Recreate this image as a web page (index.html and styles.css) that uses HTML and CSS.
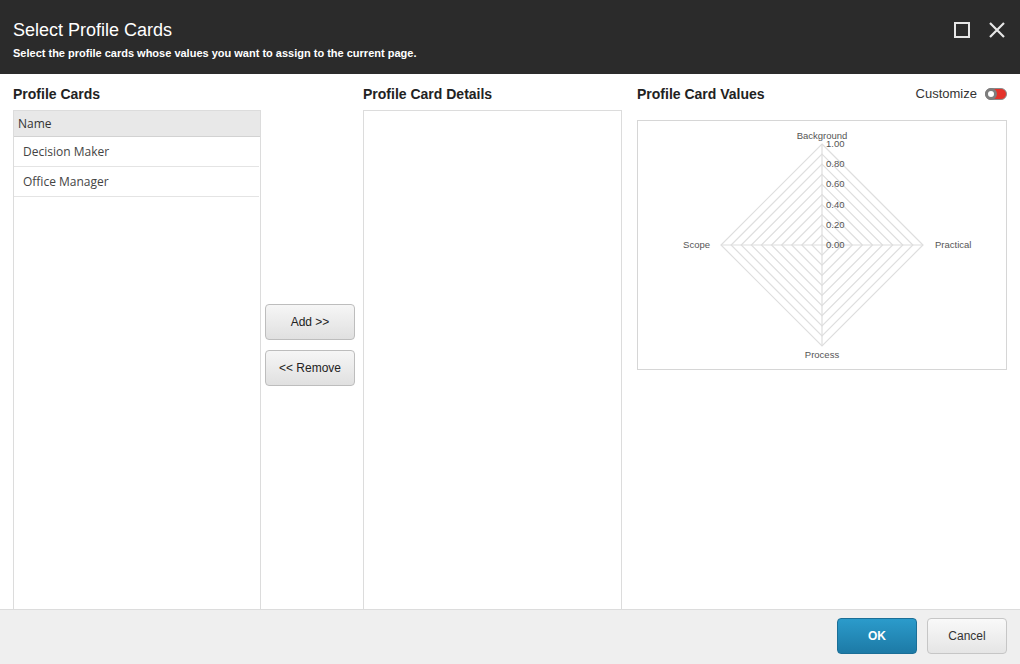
FILE: index.html
```html
<!DOCTYPE html>
<html>
<head>
	<title>Select Profile Cards</title>
	<link rel="stylesheet" href="styles.css">
</head>
<body>
	<div class="dialog">
		<div class="header">
			<div class="header-text">
				<div class="title">Select Profile Cards</div>
				<div class="subtitle">Select the profile cards whose values you want to assign to the current page.</div>
			</div>
			<div class="header-icons">
				<svg width="18" height="18" viewBox="0 0 18 18"><rect x="2" y="2" width="14" height="14" fill="none" stroke="#e6e6e6" stroke-width="2"/></svg>
				<svg width="18" height="18" viewBox="0 0 18 18"><path d="M2 2 L16 16 M16 2 L2 16" stroke="#e6e6e6" stroke-width="2.2"/></svg>
			</div>
		</div>

		<div class="content">
			<div class="col col-cards">
				<div class="heading">Profile Cards</div>
				<div class="box">
					<div class="list-head">Name</div>
					<div class="list-row">Decision Maker</div>
					<div class="list-row">Office Manager</div>
				</div>
			</div>

			<div class="col col-buttons">
				<button class="btn">Add &gt;&gt;</button>
				<button class="btn">&lt;&lt; Remove</button>
			</div>

			<div class="col col-details">
				<div class="heading">Profile Card Details</div>
				<div class="box"></div>
			</div>

			<div class="col col-values">
				<div class="heading heading-row">
					<span>Profile Card Values</span>
					<span class="customize">Customize <span class="toggle"><span class="knob"></span></span></span>
				</div>
				<div class="chart">
					<svg width="368" height="248" viewBox="0 0 368 248" id="radar"></svg>
				</div>
			</div>
		</div>

		<div class="footer">
			<button class="btn btn-ok">OK</button>
			<button class="btn btn-cancel">Cancel</button>
		</div>
	</div>

<script>
	// draw the radar grid: 10 rings plus the two axes
	const svg = document.getElementById('radar');
	const cx = 184, cy = 124, r = 101;
	let out = '';

	for (let i = 1; i <= 10; i++) {
		const d = r * i / 10;
		out += `<polygon points="${cx},${cy - d} ${cx + d},${cy} ${cx},${cy + d} ${cx - d},${cy}" fill="none" stroke="#dedede" stroke-width="1.2"/>`;
	}
	out += `<line x1="${cx}" y1="${cy - r}" x2="${cx}" y2="${cy + r}" stroke="#dedede" stroke-width="1.2"/>`;
	out += `<line x1="${cx - r}" y1="${cy}" x2="${cx + r}" y2="${cy}" stroke="#dedede" stroke-width="1.2"/>`;

	// tick labels
	for (let v = 0; v <= 5; v++) {
		const y = cy - r * v / 5 + 3;
		out += `<text x="${cx + 4}" y="${y}" class="tick">${(v / 5).toFixed(2)}</text>`;
	}

	// axis labels
	out += `<text x="${cx}" y="${cy - r - 5}" text-anchor="middle" class="axis">Background</text>`;
	out += `<text x="${cx + r + 12}" y="${cy + 3}" class="axis">Practical</text>`;
	out += `<text x="${cx}" y="${cy + r + 12}" text-anchor="middle" class="axis">Process</text>`;
	out += `<text x="${cx - r - 11}" y="${cy + 3}" text-anchor="end" class="axis">Scope</text>`;

	svg.innerHTML = out;
</script>
</body>
</html>
```

FILE: styles.css
```css
body {
	margin: 0;
	padding: 0;
	font-family: "Liberation Sans", Arial, sans-serif;
	color: #222;
}

.dialog {
	width: 1020px;
	height: 664px;
	display: flex;
	flex-direction: column;
	overflow: hidden;
	background: #fff;
}

.header {
	height: 74px;
	box-sizing: border-box;
	background: #2b2b2b;
	color: #fff;
	padding: 18px 14px 0 13px;
	display: flex;
	justify-content: space-between;
	flex-shrink: 0;
}

.title {
	font-size: 18px;
	line-height: 24px;
}

.subtitle {
	font-size: 11px;
	font-weight: bold;
	line-height: 16px;
	margin-top: 3px;
}

.header-icons {
	display: flex;
	gap: 17px;
	padding-top: 3px;
}

.content {
	flex: 1;
	display: flex;
	padding: 12px 13px 0 13px;
	min-height: 0;
}

.col {
	display: flex;
	flex-direction: column;
	flex-shrink: 0;
}

.heading {
	font-size: 14px;
	font-weight: bold;
	line-height: 16px;
	margin-bottom: 8px;
	color: #222;
}

.box {
	flex: 1;
	border: 1px solid #dcdcdc;
	border-bottom: none;
}

.col-cards {
	width: 248px;
}

.col-buttons {
	width: 90px;
	margin-left: 4px;
	padding-top: 218px;
	gap: 10px;
}

.col-details {
	width: 259px;
	margin-left: 8px;
}

.col-values {
	width: 370px;
	margin-left: 15px;
}

.list-head {
	height: 25px;
	line-height: 25px;
	background: #e8e8e8;
	border-bottom: 1px solid #d2d2d2;
	padding-left: 4px;
	font-family: "Open Sans", sans-serif;
	font-size: 12px;
	color: #333;
}

.list-row {
	height: 29px;
	line-height: 29px;
	border-bottom: 1px solid #e4e4e4;
	padding-left: 9px;
	font-family: "Open Sans", sans-serif;
	font-size: 12px;
	color: #444;
	margin-right: 1px;
}

.btn {
	font-family: "Liberation Sans", Arial, sans-serif;
	font-size: 12px;
	height: 36px;
	border-radius: 4px;
	border: 1px solid #bdbdbd;
	background: linear-gradient(#f6f6f6, #e0e0e0);
	color: #222;
	padding: 0;
	cursor: pointer;
}

.col-buttons .btn {
	width: 90px;
}

.heading-row {
	display: flex;
	justify-content: space-between;
	margin-bottom: 18px;
}

.customize {
	font-weight: normal;
	font-size: 13px;
	color: #333;
	display: flex;
	align-items: center;
	gap: 8px;
}

.toggle {
	width: 22px;
	height: 12px;
	border-radius: 6px;
	background: #e4322a;
	position: relative;
	border: 1px solid #8a8a8a;
	box-sizing: border-box;
}

.knob {
	position: absolute;
	left: -1px;
	top: -1px;
	width: 12px;
	height: 12px;
	border-radius: 50%;
	box-sizing: border-box;
	border: 3px solid #7d7d7d;
	background: #fff;
}

.chart {
	height: 250px;
	box-sizing: border-box;
	border: 1px solid #d6d6d6;
}

.chart svg {
	display: block;
}

.tick, .axis {
	font-family: "Liberation Sans", Arial, sans-serif;
	font-size: 9.5px;
	fill: #555;
}

.footer {
	height: 55px;
	box-sizing: border-box;
	flex-shrink: 0;
	background: #efefef;
	border-top: 1px solid #dcdcdc;
	display: flex;
	justify-content: flex-end;
	gap: 10px;
	padding: 8px 13px 0 0;
}

.footer .btn {
	width: 80px;
}

.btn-ok {
	background: linear-gradient(#2b9bcb, #1d7aa6);
	border-color: #1b6f97;
	color: #fff;
	font-weight: bold;
}

.btn-cancel {
	color: #333;
	border-color: #c6c6c6;
	background: linear-gradient(#f9f9f9, #e5e5e5);
}
```
